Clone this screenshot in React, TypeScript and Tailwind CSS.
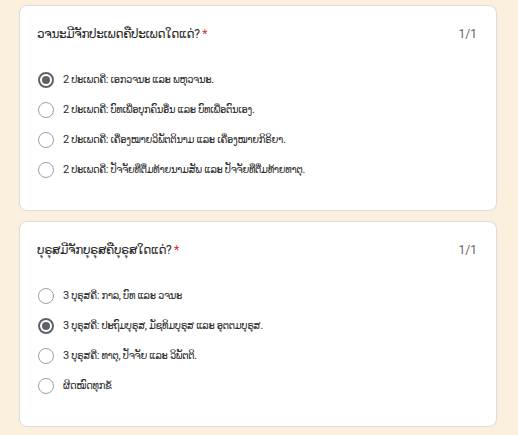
import React from "react";

type Q = { title: string; options: string[]; selected: number };

const questions: Q[] = [
  {
    title: "ວຈນະມີຈັກປະເພດຄືປະເພດໃດແດ່?",
    options: [
      "2 ປະເພດຄື: ເອກວຈນະ ແລະ ພຫຸວຈນະ.",
      "2 ປະເພດຄື: ບົທເພື່ອບຸກຄົນອື່ນ ແລະ ບົທເພື່ອຕົນເອງ.",
      "2 ປະເພດຄື: ເຄື່ອງໝາຍວິພັຕຕິນາມ ແລະ ເຄື່ອງໝາຍກິຣິຍາ.",
      "2 ປະເພດຄື: ປັຈຈັຍທີ່ຕື່ມທ້າຍນາມສັພ ແລະ ປັຈຈັຍທີ່ຕື່ມທ້າຍທາຕຸ.",
    ],
    selected: 0,
  },
  {
    title: "ບຸຣຸສມີຈັກບຸຣຸສຄືບຸຣຸສໃດແດ່?",
    options: [
      "3 ບຸຣຸສຄື: ກາລ, ບົທ ແລະ ວຈນະ",
      "3 ບຸຣຸສຄື: ປະຖົມບຸຣຸສ, ມັຊທິມບຸຣຸສ ແລະ ອຸຕຕມບຸຣຸສ.",
      "3 ບຸຣຸສຄື: ທາຕຸ, ປັຈຈັຍ ແລະ ວິພັຕຕິ.",
      "ຜິດໝົດທຸກຂໍ້",
    ],
    selected: 1,
  },
];

function Radio({ on }: { on: boolean }) {
  return on ? (
    <span className="flex h-[16px] w-[16px] shrink-0 items-center justify-center rounded-full border-2 border-[#5f6368]">
      <span className="h-[8px] w-[8px] rounded-full bg-[#5f6368]" />
    </span>
  ) : (
    <span className="h-[16px] w-[16px] shrink-0 rounded-full border-[1.5px] border-[#a0a0a0]" />
  );
}

export default function App() {
  return (
    <div
      className="min-h-[435px] w-[518px] bg-[#fbf0dd] pt-[5px] text-[#202124]"
      style={{ fontFamily: "Roboto, 'DejaVu Sans Condensed', 'DejaVu Sans', sans-serif" }}
    >
      <div className="flex flex-col gap-[10px] pl-[19px] pr-[21px]">
        {questions.map((q, qi) => (
          <div
            key={qi}
            className="rounded-[8px] border border-[#dadce0] bg-white pb-[25px] pl-[17px] pr-[19px] pt-[19px]"
          >
            <div className="flex h-[18px] items-center justify-between">
              <div
                className="text-[12px] leading-[18px] tracking-[-0.03em] text-[#2a2a2a]"
                style={{ fontFamily: "Roboto, 'DejaVu Sans', sans-serif" }}
              >
                {q.title} <span className="text-[#d93025]">*</span>
              </div>
              <div className="text-[12px] text-[#5f6368]">1/1</div>
            </div>
            <div className="mt-[22px] flex flex-col">
              {q.options.map((o, oi) => (
                <div key={oi} className="flex h-[30px] items-center gap-[9px] pl-[1px]">
                  <Radio on={oi === q.selected} />
                  <span className="text-[11px] tracking-[-0.03em] text-[#2a2a2a]">{o}</span>
                </div>
              ))}
            </div>
          </div>
        ))}
      </div>
    </div>
  );
}
